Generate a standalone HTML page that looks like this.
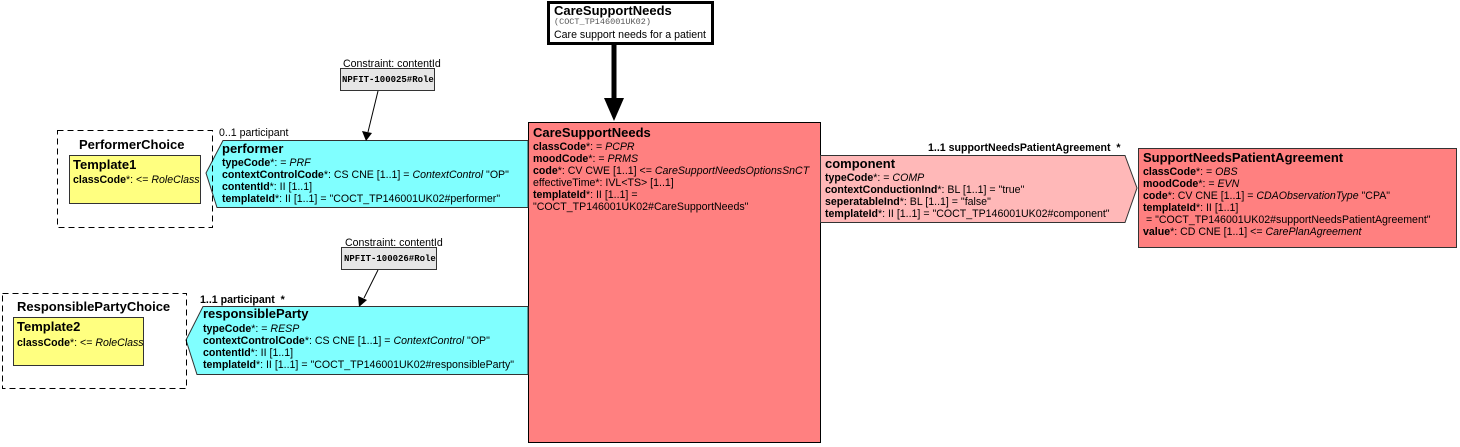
<!DOCTYPE html>
<html><head><meta charset="utf-8"><style>
body{margin:0;width:1460px;height:447px;background:#fff;position:relative;overflow:hidden;font-family:"Liberation Sans",Arial,sans-serif;font-size:10.6px;color:#000}
.a{position:absolute;white-space:nowrap;line-height:12px}
.t{font-weight:bold;font-size:13px;line-height:15px}
b{font-weight:bold}
.m{font-family:"Liberation Mono",monospace;font-size:9px;font-weight:bold}
</style></head><body>
<svg width="1460" height="447" style="position:absolute;left:0;top:0">
<rect x="548.5" y="2.5" width="164" height="41" fill="#fff" stroke="#000" stroke-width="3"/>
<line x1="614" y1="44" x2="614" y2="100" stroke="#000" stroke-width="5"/>
<polygon points="604,98 624,98 614,121" fill="#000"/>
<rect x="528.5" y="122.5" width="292" height="320" fill="#ff8080" stroke="#000"/>
<polygon points="223,140.5 528,140.5 528,207.5 217,207.5 206,173" fill="#80ffff" stroke="#333"/>
<polygon points="203,306.5 528,306.5 528,374.5 197,374.5 186,340" fill="#80ffff" stroke="#333"/>
<rect x="57.5" y="130.5" width="155" height="97" fill="none" stroke="#000" stroke-dasharray="6,4"/>
<rect x="69.5" y="155.5" width="131" height="48" fill="#ffff80" stroke="#333"/>
<rect x="2.5" y="293.5" width="184" height="95" fill="none" stroke="#000" stroke-dasharray="6,4"/>
<rect x="13.5" y="317.5" width="130" height="48" fill="#ffff80" stroke="#333"/>
<polygon points="820.5,155.5 1125,155.5 1137,188 1125,222.5 820.5,222.5" fill="#ffb8b8" stroke="#333"/>
<rect x="1138.5" y="148.5" width="318" height="99" fill="#ff8080" stroke="#333"/>
<rect x="340.5" y="68.5" width="94" height="22" fill="#e6e6e6" stroke="#333"/>
<rect x="341.5" y="247.5" width="95" height="22" fill="#e6e6e6" stroke="#333"/>
<line x1="378" y1="91" x2="368" y2="132" stroke="#000"/>
<polygon points="362,131 372,133 366,141" fill="#000"/>
<line x1="378" y1="270" x2="364" y2="298" stroke="#000"/>
<polygon points="358,296 367,300 359,307" fill="#000"/>
</svg>
<div class="a t" style="left:554px;top:3px">CareSupportNeeds</div>
<div class="a" style="left:554px;top:16px;font-family:'Liberation Mono',monospace;font-size:8.5px;color:#555">(COCT_TP146001UK02)</div>
<div class="a" style="left:554px;top:29px">Care support needs for a patient</div>

<div class="a t" style="left:533px;top:125px">CareSupportNeeds</div>
<div class="a" style="left:533px;top:141px"><b>classCode</b>*: = <i>PCPR</i><br><b>moodCode</b>*: = <i>PRMS</i><br><b>code</b>*: CV CWE [1..1] &lt;= <i>CareSupportNeedsOptionsSnCT</i><br>effectiveTime*: IVL&lt;TS&gt; [1..1]<br><b>templateId</b>*: II [1..1] =<br>"COCT_TP146001UK02#CareSupportNeeds"</div>

<div class="a" style="left:343px;top:58px">Constraint: contentId</div>
<div class="a m" style="left:342px;top:74px">NPFIT-100025#Role</div>
<div class="a" style="left:345px;top:237px">Constraint: contentId</div>
<div class="a m" style="left:344px;top:253px">NPFIT-100026#Role</div>

<div class="a" style="left:219px;top:127px">0..1 participant</div>
<div class="a t" style="left:222px;top:141px">performer</div>
<div class="a" style="left:222px;top:157px"><b>typeCode</b>*: = <i>PRF</i><br><b>contextControlCode</b>*: CS CNE [1..1] = <i>ContextControl</i> "OP"<br><b>contentId</b>*: II [1..1]<br><b>templateId</b>*: II [1..1] = "COCT_TP146001UK02#performer"</div>

<div class="a t" style="left:79px;top:137px">PerformerChoice</div>
<div class="a t" style="left:73px;top:157px">Template1</div>
<div class="a" style="left:73px;top:174px"><b>classCode</b>*: &lt;= <i>RoleClass</i></div>

<div class="a" style="left:200px;top:294px;font-weight:bold">1..1 participant &nbsp;*</div>
<div class="a t" style="left:203px;top:306px">responsibleParty</div>
<div class="a" style="left:203px;top:323px"><b>typeCode</b>*: = <i>RESP</i><br><b>contextControlCode</b>*: CS CNE [1..1] = <i>ContextControl</i> "OP"<br><b>contentId</b>*: II [1..1]<br><b>templateId</b>*: II [1..1] = "COCT_TP146001UK02#responsibleParty"</div>

<div class="a t" style="left:17px;top:299px">ResponsiblePartyChoice</div>
<div class="a t" style="left:17px;top:319px">Template2</div>
<div class="a" style="left:17px;top:337px"><b>classCode</b>*: &lt;= <i>RoleClass</i></div>

<div class="a" style="left:928px;top:142px;font-weight:bold">1..1 supportNeedsPatientAgreement &nbsp;*</div>
<div class="a t" style="left:825px;top:156px">component</div>
<div class="a" style="left:825px;top:172px"><b>typeCode</b>*: = <i>COMP</i><br><b>contextConductionInd</b>*: BL [1..1] = "true"<br><b>seperatableInd</b>*: BL [1..1] = "false"<br><b>templateId</b>*: II [1..1] = "COCT_TP146001UK02#component"</div>

<div class="a t" style="left:1143px;top:150px">SupportNeedsPatientAgreement</div>
<div class="a" style="left:1143px;top:166px"><b>classCode</b>*: = <i>OBS</i><br><b>moodCode</b>*: = <i>EVN</i><br><b>code</b>*: CV CNE [1..1] = <i>CDAObservationType</i> "CPA"<br><b>templateId</b>*: II [1..1]<br>&nbsp;= "COCT_TP146001UK02#supportNeedsPatientAgreement"<br><b>value</b>*: CD CNE [1..1] &lt;= <i>CarePlanAgreement</i></div>
</body></html>
